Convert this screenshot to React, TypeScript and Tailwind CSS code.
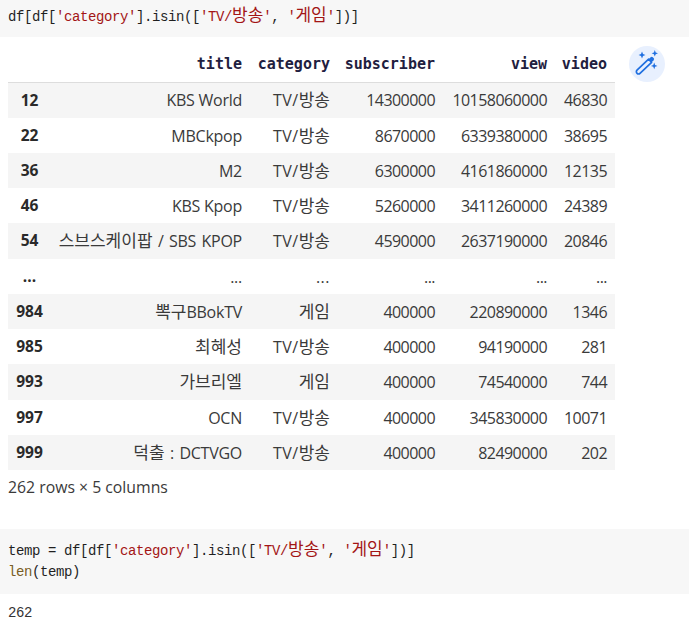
const rows = [
  ["12", "KBS World", "TV/방송", "14300000", "10158060000", "46830"],
  ["22", "MBCkpop", "TV/방송", "8670000", "6339380000", "38695"],
  ["36", "M2", "TV/방송", "6300000", "4161860000", "12135"],
  ["46", "KBS Kpop", "TV/방송", "5260000", "3411260000", "24389"],
  ["54", "스브스케이팝 / SBS KPOP", "TV/방송", "4590000", "2637190000", "20846"],
  ["...", "...", "...", "...", "...", "..."],
  ["984", "뽁구BBokTV", "게임", "400000", "220890000", "1346"],
  ["985", "최혜성", "TV/방송", "400000", "94190000", "281"],
  ["993", "가브리엘", "게임", "400000", "74540000", "744"],
  ["997", "OCN", "TV/방송", "400000", "345830000", "10071"],
  ["999", "덕출 : DCTVGO", "TV/방송", "400000", "82490000", "202"],
];

// hangul runs are set a bit larger, the CJK font is narrower than the one in the shot
const Txt = ({ text }: { text: string }) => (
  <>
    {text.split(/([가-힣]+)/).map((part, i) =>
      /[가-힣]/.test(part) ? (
        <span key={i} className="text-[17px] leading-none tracking-normal font-['Noto_Sans_CJK_KR',sans-serif]">{part}</span>
      ) : (
        part
      )
    )}
  </>
);

const Str = ({ children }: { children: string }) => (
  <span className="text-[#a31515]">
    <Txt text={children} />
  </span>
);

const Query = () => (
  <>
    df[df[<Str>'category'</Str>].isin([<Str>'TV/방송'</Str>, <Str>'게임'</Str>])]
  </>
);

const WandIcon = () => (
  <svg width="36" height="36" viewBox="0 0 36 36" fill="none">
    <path d="M8 24.2 19.6 13.2 22.6 16.3 11 27.4a2 2 0 0 1-2.9 0 2.2 2.2 0 0 1-.1-3.2Z" stroke="#1f6fe0" strokeWidth="1.7" strokeLinejoin="round" />
    <path d="M19.4 13.4 21.6 11.3a1.6 1.6 0 0 1 2.2 0l.8.8a1.6 1.6 0 0 1 0 2.2L22.4 16.4Z" fill="#1f6fe0" />
    <path d="M13 5.6 14 8 16.4 9 14 10 13 12.4 12 10 9.6 9 12 8Z" fill="#1f6fe0" />
    <path d="M25.8 4 26.7 6.4 29 7.3 26.7 8.2 25.8 10.6 24.9 8.2 22.6 7.3 24.9 6.4Z" fill="#1f6fe0" />
    <path d="M25.2 16.6 26.1 19 28.5 19.9 26.1 20.8 25.2 23.2 24.3 20.8 21.9 19.9 24.3 19Z" fill="#1f6fe0" />
  </svg>
);

export default function App() {
  const mono = "font-['Liberation_Mono','Noto_Sans_CJK_KR',monospace]";
  const sans = "font-['Open_Sans','Noto_Sans_CJK_KR',sans-serif]";

  return (
    <div className={`w-[689px] h-[626px] overflow-hidden bg-white ${sans}`}>
      <div className={`bg-[#f7f7f7] h-[37px] pl-2 pt-[5px] text-[14px] tracking-[-0.4px] leading-[18px] text-[#1f1f1f] ${mono}`}>
        <Query />
      </div>

      <div className="flex items-start pl-2 pt-[9px]">
        <table className="table-fixed w-[607px] border-collapse text-[16px] text-[#3a3a3a]">
          <colgroup>
            <col className="w-[43px]" />
            <col className="w-[199px]" />
            <col className="w-[88px]" />
            <col className="w-[105px]" />
            <col className="w-[112px]" />
            <col className="w-[60px]" />
          </colgroup>
          <thead>
            <tr className="h-[36px] border-b border-[#dddddd] text-[15px] text-[#1f2040] font-['DejaVu_Sans_Mono',monospace]">
              <th></th>
              <th className="text-right pr-2 font-bold">title</th>
              <th className="text-right pr-2 font-bold">category</th>
              <th className="text-right pr-2 font-bold">subscriber</th>
              <th className="text-right pr-2 font-bold">view</th>
              <th className="text-right pr-2 font-bold">video</th>
            </tr>
          </thead>
          <tbody>
            {rows.map((r, i) => (
              <tr
                key={r[0] + i}
                className={`${i % 4 === 0 ? "h-[36px]" : "h-[35px]"} ${i % 2 === 0 ? "bg-[#f5f5f5]" : "bg-white"}`}
              >
                <th className="text-center text-[15.5px] font-bold text-[#2a2a2a]">{r[0]}</th>
                <td className={`text-right pr-2 whitespace-nowrap tracking-[-0.25px] ${/[가-힣]/.test(r[1]) ? "[word-spacing:1.5px]" : ""}`}>
                  <Txt text={r[1]} />
                </td>
                <td className="text-right pr-2 whitespace-nowrap tracking-[0.5px]"><Txt text={r[2]} /></td>
                {r.slice(3).map((c, j) => (
                  <td key={j} className="text-right pr-2 whitespace-nowrap tracking-[-0.55px]">{c}</td>
                ))}
              </tr>
            ))}
          </tbody>
        </table>
        <button className="ml-[14px] w-9 h-9 rounded-full bg-[#e8f0fe] flex items-center justify-center shrink-0">
          <WandIcon />
        </button>
      </div>

      <div className="pl-2 mt-[7px] text-[15.8px] leading-5 text-[#3a3a3a]">262 rows × 5 columns</div>

      <div className={`mt-[32px] bg-[#f7f7f7] h-[65px] pl-2 pt-[10px] text-[14px] tracking-[-0.4px] leading-[21px] text-[#1f1f1f] ${mono}`}>
        <div>temp = <Query /></div>
        <div><span className="text-[#795e26]">len</span>(temp)</div>
      </div>

      <div className={`pl-2 pt-[10px] text-[14px] tracking-[-0.4px] leading-[18px] text-[#333333] ${mono}`}>262</div>
    </div>
  );
}
